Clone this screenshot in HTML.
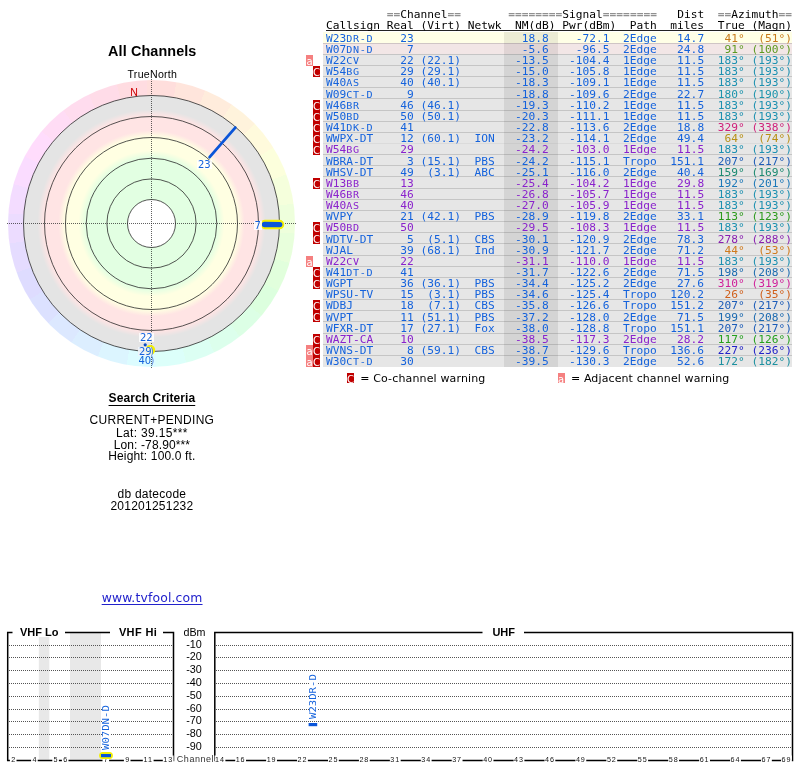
<!DOCTYPE html>
<html><head><meta charset="utf-8"><title>TV Fool radar - All Channels</title>
<style>
html,body{margin:0;padding:0;background:#fff;}
body{width:800px;height:768px;position:relative;overflow:hidden;font-family:"Liberation Sans",Arial,sans-serif;color:#000;}
.abs{position:absolute;}
.c{position:absolute;text-align:center;white-space:nowrap;line-height:1;}
.mono{font-family:"DejaVu Sans Mono","Liberation Mono",monospace;}
.sans2{font-family:"DejaVu Sans","Liberation Sans",sans-serif;}
.tr{position:absolute;left:325.90px;white-space:pre;font-family:"DejaVu Sans Mono","Liberation Mono",monospace;font-size:11.223px;line-height:14px;height:14px;transform:scaleY(0.860);transform-origin:0 0;}
.b{color:#1462dc;}
.p{color:#8a22cc;}
.g{color:#909090;font-weight:bold;}
.sc{font-size:10.101px;letter-spacing:0.676px;}
.bg{position:absolute;left:323.3px;width:468.3px;}
.bdg{position:absolute;width:7px;color:#fff;font-family:"DejaVu Sans","Liberation Sans",sans-serif;font-size:10px;line-height:13px;text-align:center;overflow:hidden;}
.bC{background:#c00000;}
.ba{background:#f58080;}
.lbl{position:absolute;font-family:"DejaVu Sans","Liberation Sans",sans-serif;font-size:10px;line-height:9px;color:#1462dc;background:rgba(255,255,255,0.85);white-space:nowrap;padding:0 1px;}
</style></head><body><div id="root" style="position:absolute;left:0;top:0;width:800px;height:768px;will-change:transform;">
<div class="abs" style="left:7.7px;top:79.7px;width:287.6px;height:287.6px;border-radius:50%;background:conic-gradient(from -2deg,#ffdedc 0.00deg 12.00deg,#ffe5dc 12.00deg 24.00deg,#ffecdc 24.00deg 36.00deg,#fff3dc 36.00deg 48.00deg,#fffadc 48.00deg 60.00deg,#fcffdc 60.00deg 72.00deg,#f5ffdc 72.00deg 84.00deg,#eeffdc 84.00deg 96.00deg,#e8ffdc 96.00deg 108.00deg,#e1ffdc 108.00deg 120.00deg,#dcffde 120.00deg 132.00deg,#dcffe5 132.00deg 144.00deg,#dcffec 144.00deg 156.00deg,#dcfff3 156.00deg 168.00deg,#dcfffa 168.00deg 180.00deg,#dcfcff 180.00deg 192.00deg,#dcf5ff 192.00deg 204.00deg,#dceeff 204.00deg 216.00deg,#dce8ff 216.00deg 228.00deg,#dce1ff 228.00deg 240.00deg,#dedcff 240.00deg 252.00deg,#e5dcff 252.00deg 264.00deg,#ecdcff 264.00deg 276.00deg,#f3dcff 276.00deg 288.00deg,#fadcff 288.00deg 300.00deg,#ffdcfc 300.00deg 312.00deg,#ffdcf5 312.00deg 324.00deg,#ffdcee 324.00deg 336.00deg,#ffdce8 336.00deg 348.00deg,#ffdce1 348.00deg 360.00deg);"></div>
<svg class="abs" style="left:0;top:0" width="310" height="380" viewBox="0 0 310 380">
<defs><radialGradient id="rg" cx="151.5" cy="223.5" r="128.0" gradientUnits="userSpaceOnUse"><stop offset="0.0000" stop-color="#fff"/><stop offset="0.1867" stop-color="#fff"/><stop offset="0.1875" stop-color="#e2ffe2"/><stop offset="0.5117" stop-color="#e2ffe2"/><stop offset="0.5703" stop-color="#ffffe2"/><stop offset="0.6758" stop-color="#ffffe2"/><stop offset="0.7266" stop-color="#ffe4e4"/><stop offset="0.8398" stop-color="#ffe4e4"/><stop offset="0.8906" stop-color="#e4e4e4"/><stop offset="1.0000" stop-color="#e4e4e4"/></radialGradient></defs>
<circle cx="151.5" cy="223.5" r="128.0" fill="url(#rg)"/>
<circle cx="151.5" cy="223.5" r="24.0" fill="none" stroke="#2a2a2a" stroke-width="0.8"/>
<circle cx="151.5" cy="223.5" r="44.6" fill="none" stroke="#2a2a2a" stroke-width="0.8"/>
<circle cx="151.5" cy="223.5" r="65.3" fill="none" stroke="#2a2a2a" stroke-width="0.8"/>
<circle cx="151.5" cy="223.5" r="86.0" fill="none" stroke="#2a2a2a" stroke-width="0.8"/>
<circle cx="151.5" cy="223.5" r="107.0" fill="none" stroke="#2a2a2a" stroke-width="0.8"/>
<circle cx="151.5" cy="223.5" r="128.0" fill="none" stroke="#2a2a2a" stroke-width="0.8"/>
<line x1="7" y1="223.5" x2="296" y2="223.5" stroke="#222" stroke-opacity="0.8" stroke-width="0.9" stroke-dasharray="1 1"/>
<line x1="151.5" y1="79" x2="151.5" y2="368" stroke="#222" stroke-opacity="0.8" stroke-width="0.9" stroke-dasharray="1 1"/>
<line x1="235.3" y1="127.6" x2="209.6" y2="157.2" stroke="#0a55d8" stroke-width="2.8" stroke-linecap="round"/>
<line x1="265" y1="224.5" x2="279.5" y2="224.6" stroke="#f4f000" stroke-width="9.5" stroke-linecap="round"/>
<line x1="264.5" y1="224.5" x2="279.7" y2="224.6" stroke="#0a55d8" stroke-width="5.4" stroke-linecap="round"/>
<circle cx="150.2" cy="350" r="5" fill="#f4f000"/>
<circle cx="145.2" cy="344.8" r="1.6" fill="#0a4cc0"/>
</svg>
<div class="c" style="left:52.3px;width:200px;top:43px;font-size:14.4px;font-weight:bold;line-height:16px;letter-spacing:0.1px;">All Channels</div>
<div class="c" style="left:102.4px;width:100px;top:69px;font-size:10.6px;line-height:11px;letter-spacing:0.27px;">TrueNorth</div>
<div class="c" style="left:124px;width:20px;top:87px;font-size:10.6px;line-height:11px;color:#cc0000;">N</div>
<div class="lbl" style="left:197px;top:159.5px;">23</div>
<div class="lbl" style="left:253.5px;top:221.3px;">7</div>
<div class="lbl" style="left:139px;top:332.7px;">22</div>
<div class="lbl" style="left:138px;top:347.1px;width:11.6px;background:rgba(240,244,250,0.9)">29</div>
<div class="lbl" style="left:150px;top:347.1px;background:none;color:#5a8ae0;padding:0;">)</div>
<div class="lbl" style="left:137.5px;top:355.5px;background:none">40</div>
<div class="lbl" style="left:150.6px;top:355.5px;background:none;color:#5a8ae0;padding:0;">)</div>
<div class="c" style="left:51.9px;width:200px;top:391px;font-size:12px;font-weight:bold;line-height:14px;letter-spacing:0.085px;text-decoration:underline;text-underline-offset:2.6px;text-decoration-thickness:1px;">Search Criteria</div>
<div class="c" style="left:51.9px;width:200px;top:412.8px;font-size:12px;line-height:14px;letter-spacing:0.29px;">CURRENT+PENDING</div>
<div class="c" style="left:51.9px;width:200px;top:425.5px;font-size:12px;line-height:14px;letter-spacing:0.32px;">Lat: 39.15***</div>
<div class="c" style="left:51.9px;width:200px;top:437.8px;font-size:12px;line-height:14px;letter-spacing:0.12px;">Lon: -78.90***</div>
<div class="c" style="left:51.9px;width:200px;top:449.4px;font-size:12px;line-height:14px;letter-spacing:0.16px;">Height: 100.0 ft.</div>
<div class="c" style="left:51.9px;width:200px;top:486.6px;font-size:12px;line-height:14px;letter-spacing:0.25px;">db datecode</div>
<div class="c" style="left:51.9px;width:200px;top:498.9px;font-size:12px;line-height:14px;letter-spacing:0.24px;">201201251232</div>
<div class="c sans2" style="left:52.1px;width:200px;top:591px;font-size:12.4px;line-height:14px;letter-spacing:0.15px;color:#2222cc;text-decoration:underline;text-underline-offset:2.2px;text-decoration-thickness:1px;">www.tvfool.com</div>
<div class="bg" style="top:32.00px;height:11.15px;background:#ffffe6;"></div>
<div class="bg" style="top:43.15px;height:11.15px;background:#f2e6e6;"></div>
<div class="bg" style="top:54.30px;height:11.15px;background:#e6e6e6;"></div>
<div class="bg" style="top:65.45px;height:11.15px;background:#e6e6e6;"></div>
<div class="bg" style="top:76.60px;height:11.15px;background:#e6e6e6;"></div>
<div class="bg" style="top:87.75px;height:11.15px;background:#e6e6e6;"></div>
<div class="bg" style="top:98.90px;height:11.15px;background:#e6e6e6;"></div>
<div class="bg" style="top:110.05px;height:11.15px;background:#e6e6e6;"></div>
<div class="bg" style="top:121.20px;height:11.15px;background:#e6e6e6;"></div>
<div class="bg" style="top:132.35px;height:11.15px;background:#e6e6e6;"></div>
<div class="bg" style="top:143.50px;height:11.15px;background:#e6e6e6;"></div>
<div class="bg" style="top:154.65px;height:11.15px;background:#e6e6e6;"></div>
<div class="bg" style="top:165.80px;height:11.15px;background:#e6e6e6;"></div>
<div class="bg" style="top:176.95px;height:11.15px;background:#e6e6e6;"></div>
<div class="bg" style="top:188.10px;height:11.15px;background:#e6e6e6;"></div>
<div class="bg" style="top:199.25px;height:11.15px;background:#e6e6e6;"></div>
<div class="bg" style="top:210.40px;height:11.15px;background:#e6e6e6;"></div>
<div class="bg" style="top:221.55px;height:11.15px;background:#e6e6e6;"></div>
<div class="bg" style="top:232.70px;height:11.15px;background:#e6e6e6;"></div>
<div class="bg" style="top:243.85px;height:11.15px;background:#e6e6e6;"></div>
<div class="bg" style="top:255.00px;height:11.15px;background:#e6e6e6;"></div>
<div class="bg" style="top:266.15px;height:11.15px;background:#e6e6e6;"></div>
<div class="bg" style="top:277.30px;height:11.15px;background:#e6e6e6;"></div>
<div class="bg" style="top:288.45px;height:11.15px;background:#e6e6e6;"></div>
<div class="bg" style="top:299.60px;height:11.15px;background:#e6e6e6;"></div>
<div class="bg" style="top:310.75px;height:11.15px;background:#e6e6e6;"></div>
<div class="bg" style="top:321.90px;height:11.15px;background:#e6e6e6;"></div>
<div class="bg" style="top:333.05px;height:11.15px;background:#e6e6e6;"></div>
<div class="bg" style="top:344.20px;height:11.15px;background:#e6e6e6;"></div>
<div class="bg" style="top:355.35px;height:12.05px;background:#e6e6e6;"></div>
<div class="abs" style="left:504px;width:53.6px;top:32.00px;height:335.40px;background:rgba(0,0,0,0.075);"></div>
<div class="bg" style="top:42.65px;height:1px;background:rgba(0,0,0,0.14);"></div>
<div class="bg" style="top:53.80px;height:1px;background:rgba(0,0,0,0.14);"></div>
<div class="bg" style="top:64.95px;height:1px;background:rgba(0,0,0,0.14);"></div>
<div class="bg" style="top:76.10px;height:1px;background:rgba(0,0,0,0.14);"></div>
<div class="bg" style="top:87.25px;height:1px;background:rgba(0,0,0,0.14);"></div>
<div class="bg" style="top:98.40px;height:1px;background:rgba(0,0,0,0.14);"></div>
<div class="bg" style="top:109.55px;height:1px;background:rgba(0,0,0,0.14);"></div>
<div class="bg" style="top:120.70px;height:1px;background:rgba(0,0,0,0.14);"></div>
<div class="bg" style="top:131.85px;height:1px;background:rgba(0,0,0,0.14);"></div>
<div class="bg" style="top:143.00px;height:1px;background:rgba(0,0,0,0.14);"></div>
<div class="bg" style="top:154.15px;height:1px;background:rgba(0,0,0,0.14);"></div>
<div class="bg" style="top:165.30px;height:1px;background:rgba(0,0,0,0.14);"></div>
<div class="bg" style="top:176.45px;height:1px;background:rgba(0,0,0,0.14);"></div>
<div class="bg" style="top:187.60px;height:1px;background:rgba(0,0,0,0.14);"></div>
<div class="bg" style="top:198.75px;height:1px;background:rgba(0,0,0,0.14);"></div>
<div class="bg" style="top:209.90px;height:1px;background:rgba(0,0,0,0.14);"></div>
<div class="bg" style="top:221.05px;height:1px;background:rgba(0,0,0,0.14);"></div>
<div class="bg" style="top:232.20px;height:1px;background:rgba(0,0,0,0.14);"></div>
<div class="bg" style="top:243.35px;height:1px;background:rgba(0,0,0,0.14);"></div>
<div class="bg" style="top:254.50px;height:1px;background:rgba(0,0,0,0.14);"></div>
<div class="bg" style="top:265.65px;height:1px;background:rgba(0,0,0,0.14);"></div>
<div class="bg" style="top:276.80px;height:1px;background:rgba(0,0,0,0.14);"></div>
<div class="bg" style="top:287.95px;height:1px;background:rgba(0,0,0,0.14);"></div>
<div class="bg" style="top:299.10px;height:1px;background:rgba(0,0,0,0.14);"></div>
<div class="bg" style="top:310.25px;height:1px;background:rgba(0,0,0,0.14);"></div>
<div class="bg" style="top:321.40px;height:1px;background:rgba(0,0,0,0.14);"></div>
<div class="bg" style="top:332.55px;height:1px;background:rgba(0,0,0,0.14);"></div>
<div class="bg" style="top:343.70px;height:1px;background:rgba(0,0,0,0.14);"></div>
<div class="bg" style="top:354.85px;height:1px;background:rgba(0,0,0,0.14);"></div>
<div class="abs" style="left:326px;width:464.5px;top:30px;height:1px;background:#222;"></div>
<div class="tr" style="top:9.10px;">         <span class="g">==</span>Channel<span class="g">==</span>       <span class="g">========</span>Signal<span class="g">========</span>   Dist  <span class="g">==</span>Azimuth<span class="g">==</span></div>
<div class="tr" style="top:19.70px;">Callsign Real (Virt) Netwk  NM(dB) Pwr(dBm)  Path  miles  True (Magn)</div>
<div class="tr" style="top:32.85px;"><span class="b">W23<span class="sc">DR-D</span>    23                18.8    -72.1  2Edge   14.7  </span><span style="color:#c87a1c"> 41°  (51°)</span></div>
<div class="tr" style="top:44.00px;"><span class="b">W07<span class="sc">DN-D</span>     7                -5.6    -96.5  2Edge   24.8  </span><span style="color:#5c9a20"> 91° (100°)</span></div>
<div class="tr" style="top:55.15px;"><span class="b">W22<span class="sc">CV</span>      22 (22.1)        -13.5   -104.4  1Edge   11.5  </span><span style="color:#1c90b0">183° (193°)</span></div>
<div class="bdg ba" style="left:306.2px;top:54.90px;height:11.15px;">a</div>
<div class="tr" style="top:66.30px;"><span class="b">W54<span class="sc">BG</span>      29 (29.1)        -15.0   -105.8  1Edge   11.5  </span><span style="color:#1c90b0">183° (193°)</span></div>
<div class="bdg bC" style="left:313px;top:66.05px;height:11.15px;">C</div>
<div class="tr" style="top:77.45px;"><span class="b">W40<span class="sc">AS</span>      40 (40.1)        -18.3   -109.1  1Edge   11.5  </span><span style="color:#1c90b0">183° (193°)</span></div>
<div class="tr" style="top:88.60px;"><span class="b">W09<span class="sc">CT-D</span>     9               -18.8   -109.6  2Edge   22.7  </span><span style="color:#1c94ac">180° (190°)</span></div>
<div class="tr" style="top:99.75px;"><span class="b">W46<span class="sc">BR</span>      46 (46.1)        -19.3   -110.2  1Edge   11.5  </span><span style="color:#1c90b0">183° (193°)</span></div>
<div class="bdg bC" style="left:313px;top:99.50px;height:11.15px;">C</div>
<div class="tr" style="top:110.90px;"><span class="b">W50<span class="sc">BD</span>      50 (50.1)        -20.3   -111.1  1Edge   11.5  </span><span style="color:#1c90b0">183° (193°)</span></div>
<div class="bdg bC" style="left:313px;top:110.65px;height:11.15px;">C</div>
<div class="tr" style="top:122.05px;"><span class="b">W41<span class="sc">DK-D</span>    41               -22.8   -113.6  2Edge   18.8  </span><span style="color:#d0207a">329° (338°)</span></div>
<div class="bdg bC" style="left:313px;top:121.80px;height:11.15px;">C</div>
<div class="tr" style="top:133.20px;"><span class="b">WWPX-DT    12 (60.1)  ION   -23.2   -114.1  2Edge   49.4  </span><span style="color:#b89014"> 64°  (74°)</span></div>
<div class="bdg bC" style="left:313px;top:132.95px;height:11.15px;">C</div>
<div class="tr" style="top:144.35px;"><span class="p">W54<span class="sc">BG</span>      29               -24.2   -103.0  1Edge   11.5  </span><span style="color:#1c90b0">183° (193°)</span></div>
<div class="bdg bC" style="left:313px;top:144.10px;height:11.15px;">C</div>
<div class="tr" style="top:155.50px;"><span class="b">WBRA-DT     3 (15.1)  PBS   -24.2   -115.1  Tropo  151.1  </span><span style="color:#1c5cb8">207° (217°)</span></div>
<div class="tr" style="top:166.65px;"><span class="b">WHSV-DT    49  (3.1)  ABC   -25.1   -116.0  2Edge   40.4  </span><span style="color:#1c8a70">159° (169°)</span></div>
<div class="tr" style="top:177.80px;"><span class="p">W13<span class="sc">BB</span>      13               -25.4   -104.2  1Edge   29.8  </span><span style="color:#1c78b8">192° (201°)</span></div>
<div class="bdg bC" style="left:313px;top:177.55px;height:11.15px;">C</div>
<div class="tr" style="top:188.95px;"><span class="p">W46<span class="sc">BR</span>      46               -26.8   -105.7  1Edge   11.5  </span><span style="color:#1c90b0">183° (193°)</span></div>
<div class="tr" style="top:200.10px;"><span class="p">W40<span class="sc">AS</span>      40               -27.0   -105.9  1Edge   11.5  </span><span style="color:#1c90b0">183° (193°)</span></div>
<div class="tr" style="top:211.25px;"><span class="b">WVPY       21 (42.1)  PBS   -28.9   -119.8  2Edge   33.1  </span><span style="color:#2c9a1c">113° (123°)</span></div>
<div class="tr" style="top:222.40px;"><span class="p">W50<span class="sc">BD</span>      50               -29.5   -108.3  1Edge   11.5  </span><span style="color:#1c90b0">183° (193°)</span></div>
<div class="bdg bC" style="left:313px;top:222.15px;height:11.15px;">C</div>
<div class="tr" style="top:233.55px;"><span class="b">WDTV-DT     5  (5.1)  CBS   -30.1   -120.9  2Edge   78.3  </span><span style="color:#8a20b0">278° (288°)</span></div>
<div class="bdg bC" style="left:313px;top:233.30px;height:11.15px;">C</div>
<div class="tr" style="top:244.70px;"><span class="b">WJAL       39 (68.1)  Ind   -30.9   -121.7  2Edge   71.2  </span><span style="color:#d07a1c"> 44°  (53°)</span></div>
<div class="tr" style="top:255.85px;"><span class="p">W22<span class="sc">CV</span>      22               -31.1   -110.0  1Edge   11.5  </span><span style="color:#1c90b0">183° (193°)</span></div>
<div class="bdg ba" style="left:306.2px;top:255.60px;height:11.15px;">a</div>
<div class="tr" style="top:267.00px;"><span class="b">W41<span class="sc">DT-D</span>    41               -31.7   -122.6  2Edge   71.5  </span><span style="color:#1c6cb0">198° (208°)</span></div>
<div class="bdg bC" style="left:313px;top:266.75px;height:11.15px;">C</div>
<div class="tr" style="top:278.15px;"><span class="b">WGPT       36 (36.1)  PBS   -34.4   -125.2  2Edge   27.6  </span><span style="color:#d0209a">310° (319°)</span></div>
<div class="bdg bC" style="left:313px;top:277.90px;height:11.15px;">C</div>
<div class="tr" style="top:289.30px;"><span class="b">WPSU-TV    15  (3.1)  PBS   -34.6   -125.4  Tropo  120.2  </span><span style="color:#d0601c"> 26°  (35°)</span></div>
<div class="tr" style="top:300.45px;"><span class="b">WDBJ       18  (7.1)  CBS   -35.8   -126.6  Tropo  151.2  </span><span style="color:#1c5cb8">207° (217°)</span></div>
<div class="bdg bC" style="left:313px;top:300.20px;height:11.15px;">C</div>
<div class="tr" style="top:311.60px;"><span class="b">WVPT       11 (51.1)  PBS   -37.2   -128.0  2Edge   71.5  </span><span style="color:#1c6ab0">199° (208°)</span></div>
<div class="bdg bC" style="left:313px;top:311.35px;height:11.15px;">C</div>
<div class="tr" style="top:322.75px;"><span class="b">WFXR-DT    17 (27.1)  Fox   -38.0   -128.8  Tropo  151.1  </span><span style="color:#1c5cb8">207° (217°)</span></div>
<div class="tr" style="top:333.90px;"><span class="p">WAZT-CA    10               -38.5   -117.3  2Edge   28.2  </span><span style="color:#24a01c">117° (126°)</span></div>
<div class="bdg bC" style="left:313px;top:333.65px;height:11.15px;">C</div>
<div class="tr" style="top:345.05px;"><span class="b">WVNS-DT     8 (59.1)  CBS   -38.7   -129.6  Tropo  136.6  </span><span style="color:#2222c8">227° (236°)</span></div>
<div class="bdg bC" style="left:313px;top:344.80px;height:11.15px;">C</div>
<div class="bdg ba" style="left:306.2px;top:344.80px;height:11.15px;">a</div>
<div class="tr" style="top:356.20px;"><span class="b">W30<span class="sc">CT-D</span>    30               -39.5   -130.3  2Edge   52.6  </span><span style="color:#1c90a0">172° (182°)</span></div>
<div class="bdg bC" style="left:313px;top:355.95px;height:11.15px;">C</div>
<div class="bdg ba" style="left:306.2px;top:355.95px;height:11.15px;">a</div>
<div class="bdg bC" style="left:347px;top:372.5px;height:10.5px;">C</div>
<div class="abs sans2" style="left:360.2px;top:372px;font-size:11px;line-height:14px;letter-spacing:0.145px;white-space:nowrap;">= Co-channel warning</div>
<div class="bdg ba" style="left:557.5px;top:372.5px;height:10.5px;">a</div>
<div class="abs sans2" style="left:571px;top:372px;font-size:11px;line-height:14px;letter-spacing:0.11px;white-space:nowrap;">= Adjacent channel warning</div>
<svg class="abs" style="left:0;top:600px" width="800" height="168" viewBox="0 600 800 168">
<rect x="38.8" y="633" width="10.5" height="126.6" fill="#e8e8e8"/>
<rect x="70" y="633" width="31" height="126.6" fill="#e8e8e8"/>
<line x1="9" y1="645.50" x2="173" y2="645.50" stroke="#555" stroke-width="1" stroke-dasharray="1 1"/>
<line x1="216" y1="645.50" x2="792" y2="645.50" stroke="#555" stroke-width="1" stroke-dasharray="1 1"/>
<line x1="9" y1="657.50" x2="173" y2="657.50" stroke="#555" stroke-width="1" stroke-dasharray="1 1"/>
<line x1="216" y1="657.50" x2="792" y2="657.50" stroke="#555" stroke-width="1" stroke-dasharray="1 1"/>
<line x1="9" y1="670.50" x2="173" y2="670.50" stroke="#555" stroke-width="1" stroke-dasharray="1 1"/>
<line x1="216" y1="670.50" x2="792" y2="670.50" stroke="#555" stroke-width="1" stroke-dasharray="1 1"/>
<line x1="9" y1="683.50" x2="173" y2="683.50" stroke="#555" stroke-width="1" stroke-dasharray="1 1"/>
<line x1="216" y1="683.50" x2="792" y2="683.50" stroke="#555" stroke-width="1" stroke-dasharray="1 1"/>
<line x1="9" y1="696.50" x2="173" y2="696.50" stroke="#555" stroke-width="1" stroke-dasharray="1 1"/>
<line x1="216" y1="696.50" x2="792" y2="696.50" stroke="#555" stroke-width="1" stroke-dasharray="1 1"/>
<line x1="9" y1="709.50" x2="173" y2="709.50" stroke="#555" stroke-width="1" stroke-dasharray="1 1"/>
<line x1="216" y1="709.50" x2="792" y2="709.50" stroke="#555" stroke-width="1" stroke-dasharray="1 1"/>
<line x1="9" y1="721.50" x2="173" y2="721.50" stroke="#555" stroke-width="1" stroke-dasharray="1 1"/>
<line x1="216" y1="721.50" x2="792" y2="721.50" stroke="#555" stroke-width="1" stroke-dasharray="1 1"/>
<line x1="9" y1="734.50" x2="173" y2="734.50" stroke="#555" stroke-width="1" stroke-dasharray="1 1"/>
<line x1="216" y1="734.50" x2="792" y2="734.50" stroke="#555" stroke-width="1" stroke-dasharray="1 1"/>
<line x1="9" y1="747.50" x2="173" y2="747.50" stroke="#555" stroke-width="1" stroke-dasharray="1 1"/>
<line x1="216" y1="747.50" x2="792" y2="747.50" stroke="#555" stroke-width="1" stroke-dasharray="1 1"/>
<path d="M7.7 761.25 V632.50 H12.5 M65 632.50 H110 M162.5 632.50 H173.5 V761.25 M7.7 760.50 H173.5" fill="none" stroke="#000" stroke-width="1.5"/>
<path d="M214.8 761.25 V632.50 H482.5 M524 632.50 H792.5 V761.25 M214.8 760.50 H792.5" fill="none" stroke="#000" stroke-width="1.5"/>
<rect x="9.90" y="755.5" width="6.60" height="8" fill="#fff"/><text x="13.20" y="762.4" font-size="7.2" text-anchor="middle" font-family="Liberation Sans,Arial,sans-serif" fill="#111">2</text>
<rect x="31.10" y="755.5" width="6.60" height="8" fill="#fff"/><text x="34.40" y="762.4" font-size="7.2" text-anchor="middle" font-family="Liberation Sans,Arial,sans-serif" fill="#111">4</text>
<rect x="52.30" y="755.5" width="6.60" height="8" fill="#fff"/><text x="55.60" y="762.4" font-size="7.2" text-anchor="middle" font-family="Liberation Sans,Arial,sans-serif" fill="#111">5</text>
<rect x="61.90" y="755.5" width="6.60" height="8" fill="#fff"/><text x="65.20" y="762.4" font-size="7.2" text-anchor="middle" font-family="Liberation Sans,Arial,sans-serif" fill="#111">6</text>
<rect x="102.50" y="755.5" width="6.60" height="8" fill="#fff"/><text x="105.80" y="762.4" font-size="7.2" text-anchor="middle" font-family="Liberation Sans,Arial,sans-serif" fill="#111">7</text>
<rect x="123.90" y="755.5" width="6.60" height="8" fill="#fff"/><text x="127.20" y="762.4" font-size="7.2" text-anchor="middle" font-family="Liberation Sans,Arial,sans-serif" fill="#111">9</text>
<rect x="142.80" y="755.5" width="10.80" height="8" fill="#fff"/><text x="148.20" y="762.4" font-size="7.2" text-anchor="middle" font-family="Liberation Sans,Arial,sans-serif" fill="#111" letter-spacing="0.9">11</text>
<rect x="162.80" y="755.5" width="10.80" height="8" fill="#fff"/><text x="168.20" y="762.4" font-size="7.2" text-anchor="middle" font-family="Liberation Sans,Arial,sans-serif" fill="#111" letter-spacing="0.9">13</text>
<line x1="102.6" y1="755.5" x2="109.4" y2="755.5" stroke="#f4f000" stroke-width="7" stroke-linecap="round"/>
<rect x="214.60" y="755.5" width="10.80" height="8" fill="#fff"/><text x="220.00" y="762.4" font-size="7.2" text-anchor="middle" font-family="Liberation Sans,Arial,sans-serif" fill="#111" letter-spacing="0.9">14</text>
<rect x="235.22" y="755.5" width="10.80" height="8" fill="#fff"/><text x="240.62" y="762.4" font-size="7.2" text-anchor="middle" font-family="Liberation Sans,Arial,sans-serif" fill="#111" letter-spacing="0.9">16</text>
<rect x="266.15" y="755.5" width="10.80" height="8" fill="#fff"/><text x="271.55" y="762.4" font-size="7.2" text-anchor="middle" font-family="Liberation Sans,Arial,sans-serif" fill="#111" letter-spacing="0.9">19</text>
<rect x="297.08" y="755.5" width="10.80" height="8" fill="#fff"/><text x="302.48" y="762.4" font-size="7.2" text-anchor="middle" font-family="Liberation Sans,Arial,sans-serif" fill="#111" letter-spacing="0.9">22</text>
<rect x="328.01" y="755.5" width="10.80" height="8" fill="#fff"/><text x="333.41" y="762.4" font-size="7.2" text-anchor="middle" font-family="Liberation Sans,Arial,sans-serif" fill="#111" letter-spacing="0.9">25</text>
<rect x="358.94" y="755.5" width="10.80" height="8" fill="#fff"/><text x="364.34" y="762.4" font-size="7.2" text-anchor="middle" font-family="Liberation Sans,Arial,sans-serif" fill="#111" letter-spacing="0.9">28</text>
<rect x="389.87" y="755.5" width="10.80" height="8" fill="#fff"/><text x="395.27" y="762.4" font-size="7.2" text-anchor="middle" font-family="Liberation Sans,Arial,sans-serif" fill="#111" letter-spacing="0.9">31</text>
<rect x="420.80" y="755.5" width="10.80" height="8" fill="#fff"/><text x="426.20" y="762.4" font-size="7.2" text-anchor="middle" font-family="Liberation Sans,Arial,sans-serif" fill="#111" letter-spacing="0.9">34</text>
<rect x="451.73" y="755.5" width="10.80" height="8" fill="#fff"/><text x="457.13" y="762.4" font-size="7.2" text-anchor="middle" font-family="Liberation Sans,Arial,sans-serif" fill="#111" letter-spacing="0.9">37</text>
<rect x="482.66" y="755.5" width="10.80" height="8" fill="#fff"/><text x="488.06" y="762.4" font-size="7.2" text-anchor="middle" font-family="Liberation Sans,Arial,sans-serif" fill="#111" letter-spacing="0.9">40</text>
<rect x="513.59" y="755.5" width="10.80" height="8" fill="#fff"/><text x="518.99" y="762.4" font-size="7.2" text-anchor="middle" font-family="Liberation Sans,Arial,sans-serif" fill="#111" letter-spacing="0.9">43</text>
<rect x="544.52" y="755.5" width="10.80" height="8" fill="#fff"/><text x="549.92" y="762.4" font-size="7.2" text-anchor="middle" font-family="Liberation Sans,Arial,sans-serif" fill="#111" letter-spacing="0.9">46</text>
<rect x="575.45" y="755.5" width="10.80" height="8" fill="#fff"/><text x="580.85" y="762.4" font-size="7.2" text-anchor="middle" font-family="Liberation Sans,Arial,sans-serif" fill="#111" letter-spacing="0.9">49</text>
<rect x="606.38" y="755.5" width="10.80" height="8" fill="#fff"/><text x="611.78" y="762.4" font-size="7.2" text-anchor="middle" font-family="Liberation Sans,Arial,sans-serif" fill="#111" letter-spacing="0.9">52</text>
<rect x="637.31" y="755.5" width="10.80" height="8" fill="#fff"/><text x="642.71" y="762.4" font-size="7.2" text-anchor="middle" font-family="Liberation Sans,Arial,sans-serif" fill="#111" letter-spacing="0.9">55</text>
<rect x="668.24" y="755.5" width="10.80" height="8" fill="#fff"/><text x="673.64" y="762.4" font-size="7.2" text-anchor="middle" font-family="Liberation Sans,Arial,sans-serif" fill="#111" letter-spacing="0.9">58</text>
<rect x="699.17" y="755.5" width="10.80" height="8" fill="#fff"/><text x="704.57" y="762.4" font-size="7.2" text-anchor="middle" font-family="Liberation Sans,Arial,sans-serif" fill="#111" letter-spacing="0.9">61</text>
<rect x="730.10" y="755.5" width="10.80" height="8" fill="#fff"/><text x="735.50" y="762.4" font-size="7.2" text-anchor="middle" font-family="Liberation Sans,Arial,sans-serif" fill="#111" letter-spacing="0.9">64</text>
<rect x="761.03" y="755.5" width="10.80" height="8" fill="#fff"/><text x="766.43" y="762.4" font-size="7.2" text-anchor="middle" font-family="Liberation Sans,Arial,sans-serif" fill="#111" letter-spacing="0.9">67</text>
<rect x="781.05" y="755.5" width="10.80" height="8" fill="#fff"/><text x="786.45" y="762.4" font-size="7.2" text-anchor="middle" font-family="Liberation Sans,Arial,sans-serif" fill="#111" letter-spacing="0.9">69</text>
<rect x="101" y="754" width="10" height="3.2" fill="#0a55d8"/>
<rect x="308.6" y="723" width="8.6" height="3.2" fill="#0a55d8"/>
</svg>
<div class="c" style="left:13.4px;top:626.9px;width:51.5px;font-size:11px;font-weight:bold;line-height:10px;background:#fff;">VHF Lo</div>
<div class="c" style="left:113px;top:626.9px;width:50px;font-size:11px;font-weight:bold;line-height:10px;letter-spacing:0.35px;background:#fff;">VHF Hi</div>
<div class="c" style="left:483.7px;top:627.1px;width:40px;font-size:11px;font-weight:bold;line-height:11px;background:#fff;">UHF</div>
<div class="c" style="left:175px;top:626.8px;width:39px;font-size:10.7px;line-height:11px;">dBm</div>
<div class="c" style="left:174.5px;top:638.60px;width:39px;font-size:10.8px;line-height:11px;">-10</div>
<div class="c" style="left:174.5px;top:651.39px;width:39px;font-size:10.8px;line-height:11px;">-20</div>
<div class="c" style="left:174.5px;top:664.18px;width:39px;font-size:10.8px;line-height:11px;">-30</div>
<div class="c" style="left:174.5px;top:676.97px;width:39px;font-size:10.8px;line-height:11px;">-40</div>
<div class="c" style="left:174.5px;top:689.76px;width:39px;font-size:10.8px;line-height:11px;">-50</div>
<div class="c" style="left:174.5px;top:702.55px;width:39px;font-size:10.8px;line-height:11px;">-60</div>
<div class="c" style="left:174.5px;top:715.34px;width:39px;font-size:10.8px;line-height:11px;">-70</div>
<div class="c" style="left:174.5px;top:728.13px;width:39px;font-size:10.8px;line-height:11px;">-80</div>
<div class="c" style="left:174.5px;top:740.92px;width:39px;font-size:10.8px;line-height:11px;">-90</div>
<div class="c" style="left:176px;top:753.7px;width:39px;font-size:9px;letter-spacing:0.55px;line-height:10px;color:#333;">Channel</div>
<div class="mono" style="position:absolute;left:101.90px;top:750.20px;font-size:10.65px;line-height:9px;height:9px;color:#1462dc;background:#fff;white-space:pre;transform-origin:0 0;transform:rotate(-90deg) scaleY(0.9);">W07DN-D</div>
<div class="mono" style="position:absolute;left:309.40px;top:719.20px;font-size:10.65px;line-height:9px;height:9px;color:#1462dc;background:#fff;white-space:pre;transform-origin:0 0;transform:rotate(-90deg) scaleY(0.9);">W23DR-D</div>
</div></body></html>
